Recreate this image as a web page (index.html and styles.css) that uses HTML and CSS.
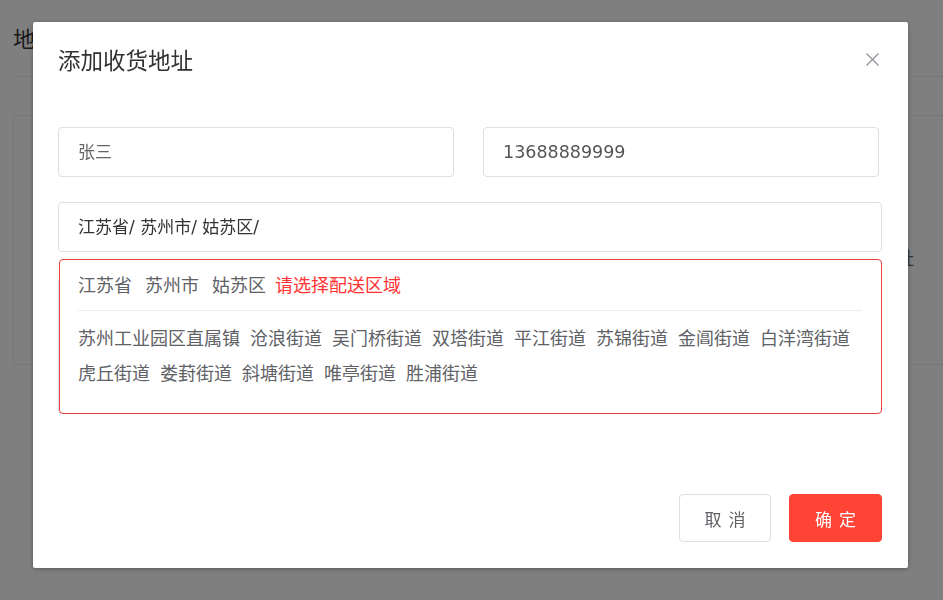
FILE: index.html
```html
<!DOCTYPE html>
<html lang="zh-CN">
<head>
<meta charset="utf-8">
<title>添加收货地址</title>
<link rel="stylesheet" href="styles.css">
</head>
<body>
<div class="page">
  <h2 class="page-title">地址管理</h2>
  <div class="page-box">
    <div class="page-row"><span class="page-cell">设为默认地址</span></div>
  </div>
</div>
<div class="mask">
  <div class="dialog">
    <div class="dialog-header">
      <span class="dialog-title">添加收货地址</span>
      <button class="close" type="button" aria-label="关闭">
        <svg width="13" height="13" viewBox="0 0 13 13"><path d="M0.5 0.5L12.5 12.5M12.5 0.5L0.5 12.5" stroke="#909399" stroke-width="1.3" fill="none"/></svg>
      </button>
    </div>
    <div class="dialog-body">
      <div class="row-two">
        <div class="field">张三</div>
        <div class="field phone">13688889999</div>
      </div>
      <div class="cascader-wrap">
        <div class="field cascader">江苏省/ 苏州市/ 姑苏区/</div>
        <div class="panel">
          <div class="tabs">
            <span class="tab">江苏省</span>
            <span class="tab">苏州市</span>
            <span class="tab tab-last">姑苏区</span>
            <span class="tab-current">请选择配送区域</span>
          </div>
          <div class="items">
            <span>苏州工业园区直属镇</span>
            <span>沧浪街道</span>
            <span>吴门桥街道</span>
            <span>双塔街道</span>
            <span>平江街道</span>
            <span>苏锦街道</span>
            <span>金阊街道</span>
            <span>白洋湾街道</span>
            <span>虎丘街道</span>
            <span>娄葑街道</span>
            <span>斜塘街道</span>
            <span>唯亭街道</span>
            <span>胜浦街道</span>
          </div>
        </div>
      </div>
      <div class="field detail"></div>
    </div>
    <div class="dialog-footer">
      <button class="btn btn-cancel" type="button">取消</button>
      <button class="btn btn-ok" type="button">确定</button>
    </div>
  </div>
</div>
</body>
</html>
```
FILE: styles.css
```css
html, body {
  margin: 0;
  height: 600px;
  overflow: hidden;
}
body {
  font-family: "DejaVu Sans", "Noto Sans CJK SC", sans-serif;
  background: #fff;
  color: #333;
}

/* background page */
.page {
  padding-left: 13px;
}
.page-title {
  margin: 0;
  padding: 25px 0 21px;
  font-size: 22px;
  line-height: 30px;
  font-weight: normal;
  color: #333;
  border-bottom: 1px solid #eee;
}
.page-box {
  margin-top: 38px;
  height: 250px;
  box-sizing: border-box;
  border: 1px solid #eee;
  border-right: none;
}
.page-row {
  display: flex;
  justify-content: flex-end;
  padding: 130px 29px 0 0;
  line-height: 26px;
  font-size: 18px;
  color: #666;
}

/* modal */
.mask {
  position: fixed;
  inset: 0;
  background: rgba(0, 0, 0, 0.5);
  display: flex;
  align-items: flex-start;
  padding: 22px 0 0 33px;
}
.dialog {
  position: relative;
  width: 875px;
  height: 546px;
  background: #fff;
  border-radius: 2px;
  box-shadow: 0 1px 4px rgba(0, 0, 0, 0.3);
  display: flex;
  flex-direction: column;
}
.dialog-header {
  padding: 25px 25px 0;
}
.dialog-title {
  display: block;
  font-size: 22.5px;
  line-height: 28px;
  color: #303133;
}
.close {
  position: absolute;
  top: 31px;
  right: 29px;
  width: 13px;
  height: 13px;
  padding: 0;
  border: 0;
  background: none;
  display: flex;
}
.dialog-body {
  padding: 52px 26px 0 25px;
}
.row-two {
  display: grid;
  grid-template-columns: 396px 396px;
  column-gap: 29px;
}
.field {
  height: 50px;
  box-sizing: border-box;
  border: 1px solid #dcdfe6;
  border-radius: 4px;
  padding: 0 19px;
  font-size: 17px;
  line-height: 48px;
  color: #666;
}
.phone {
  font-size: 17.5px;
  color: #555;
}
.cascader-wrap {
  position: relative;
  margin-top: 25px;
}
.cascader {
  color: #333;
}
.detail {
  margin-top: 25px;
  height: 137px;
}
.panel {
  position: absolute;
  top: 57px;
  left: 1px;
  width: 823px;
  height: 155px;
  box-sizing: border-box;
  border: 1px solid #f03e3e;
  border-radius: 4px;
  background: #fff;
  padding: 0 19px 0 18px;
  z-index: 2;
}
.tabs {
  display: flex;
  padding: 14px 0 12px;
  line-height: 24px;
  font-size: 18px;
  color: #606266;
  border-bottom: 1px solid #ebeef5;
}
.tab {
  margin-right: 13px;
}
.tab-last {
  margin-right: 9px;
}
.tab-current {
  color: #ff3333;
}
.items {
  display: flex;
  flex-wrap: wrap;
  column-gap: 10px;
  padding-top: 10px;
  line-height: 35px;
  font-size: 18px;
  color: #606266;
}
.dialog-footer {
  margin-top: auto;
  display: flex;
  justify-content: flex-end;
  gap: 18px;
  padding: 0 26px 26px 0;
}
.btn {
  width: 92px;
  height: 48px;
  box-sizing: border-box;
  border-radius: 4px;
  padding: 0 0 0 7px;
  font-family: inherit;
  font-size: 17px;
  letter-spacing: 7px;
  cursor: pointer;
}
.btn-cancel {
  background: #fff;
  border: 1px solid #dcdfe6;
  color: #606266;
}
.btn-ok {
  width: 93px;
  background: #ff4335;
  border: 1px solid #ff4335;
  color: #fff;
}
```
